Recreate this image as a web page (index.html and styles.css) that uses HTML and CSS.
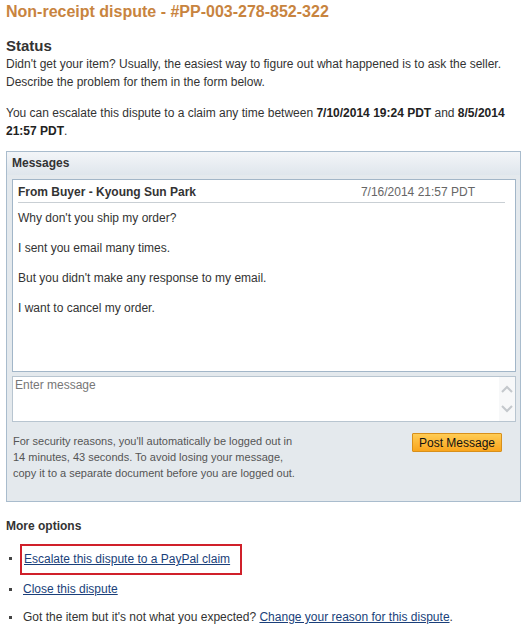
FILE: index.html
```html
<!DOCTYPE html>
<html>
<head>
<meta charset="utf-8">
<link rel="stylesheet" href="styles.css">
</head>
<body>
<div class="page">
  <h1 class="title">Non-receipt dispute - #PP-003-278-852-322</h1>
  <h2 class="status">Status</h2>
  <p class="text">Didn't get your item? Usually, the easiest way to figure out what happened is to ask the seller. Describe the problem for them in the form below.</p>
  <p class="text escalate">You can escalate this dispute to a claim any time between <b>7/10/2014 19:24 PDT</b> and <b>8/5/2014 21:57 PDT</b>.</p>

  <div class="panel">
    <div class="panel-head">Messages</div>
    <div class="panel-body">
      <div class="thread">
        <div class="msg-head">
          <span class="from">From Buyer - Kyoung Sun Park</span>
          <span class="date">7/16/2014 21:57 PDT</span>
        </div>
        <p class="msg-line">Why don't you ship my order?</p>
        <p class="msg-line">I sent you email many times.</p>
        <p class="msg-line">But you didn't make any response to my email.</p>
        <p class="msg-line">I want to cancel my order.</p>
      </div>
      <div class="compose">
        <span class="placeholder">Enter message</span>
        <div class="scroll">
          <svg width="14" height="10" viewBox="0 0 14 10"><path d="M2 8 L7 3 L12 8" fill="none" stroke="#c4c8cc" stroke-width="2"/></svg>
          <svg width="14" height="10" viewBox="0 0 14 10"><path d="M2 2 L7 7 L12 2" fill="none" stroke="#c4c8cc" stroke-width="2"/></svg>
        </div>
      </div>
      <div class="footer-row">
        <p class="security">For security reasons, you'll automatically be logged out in 14 minutes, 43 seconds. To avoid losing your message, copy it to a separate document before you are logged out.</p>
        <button class="post">Post Message</button>
      </div>
    </div>
  </div>

  <h3 class="more">More options</h3>
  <ul class="options">
    <li><span class="highlight"><a href="#">Escalate this dispute to a PayPal claim</a></span></li>
    <li><a href="#">Close this dispute</a></li>
    <li>Got the item but it's not what you expected? <a href="#">Change your reason for this dispute</a>.</li>
  </ul>
</div>
</body>
</html>
```
FILE: styles.css
```css
html, body {
  margin: 0;
  padding: 0;
  background: #fff;
}
body {
  font-family: "Liberation Sans", Arial, sans-serif;
  font-size: 12px;
  color: #333;
}
.page {
  padding: 0 8px 0 6px;
}
.title {
  margin: 0;
  padding-top: 1px;
  font-size: 16px;
  line-height: 21px;
  font-weight: bold;
  color: #c8843f;
}
.status {
  margin: 15px 0 0;
  font-size: 15px;
  line-height: 18px;
  font-weight: bold;
  color: #333;
}
.text {
  margin: 0;
  line-height: 18px;
  color: #333;
}
.text b { color: #222; }
.escalate {
  margin-top: 13px;
}
.panel {
  margin-top: 11px;
  border: 1px solid #a9bccd;
  background: #e4e9ed;
}
.panel-head {
  height: 23px;
  line-height: 22px;
  padding-left: 5px;
  font-weight: bold;
  color: #333;
  background: linear-gradient(#f3f5f8, #dfe6ec);
}
.panel-body {
  padding: 4px 4px 0 5px;
}
.thread {
  height: 191px;
  background: #fff;
  border: 1px solid #a2b6c8;
  padding: 0 10px 0 5px;
}
.msg-head {
  display: flex;
  justify-content: space-between;
  border-bottom: 1px solid #c9cfd4;
  height: 22px;
  line-height: 25px;
  margin-bottom: 6px;
}
.from {
  font-weight: bold;
  color: #333;
}
.date {
  color: #666;
  padding-right: 30px;
}
.msg-line {
  margin: 0 0 12px;
  line-height: 18px;
  color: #333;
}
.compose {
  margin-top: 4px;
  height: 44px;
  background: #fff;
  border: 1px solid #b8c5d0;
  display: flex;
  justify-content: space-between;
  padding-left: 2px;
}
.placeholder {
  color: #777;
  line-height: 17px;
}
.scroll {
  width: 16px;
  background: #f7f8f9;
  display: flex;
  flex-direction: column;
  align-items: center;
  justify-content: space-around;
  padding: 2px 0;
}
.footer-row {
  display: flex;
  justify-content: space-between;
  align-items: flex-start;
  padding: 11px 14px 0 1px;
  height: 68px;
}
.security {
  margin: 0;
  width: 282px;
  font-size: 11px;
  line-height: 16px;
  color: #555;
}
.post {
  margin-top: 0;
  font-family: "Liberation Sans", Arial, sans-serif;
  font-size: 12px;
  color: #111;
  height: 19px;
  padding: 0 6px;
  border: 1px solid #d8901b;
  border-radius: 1px;
  background: linear-gradient(#ffcc55, #f9a51d);
  line-height: 16px;
}
.more {
  margin: 15px 0 0;
  font-size: 12px;
  line-height: 18px;
  font-weight: bold;
  color: #333;
}
.options {
  list-style: none;
  margin: 14px 0 0;
  padding: 0;
}
.options li {
  position: relative;
  padding-left: 17px;
  line-height: 18px;
  margin-bottom: 10px;
  color: #333;
}
.options li::before {
  content: "";
  position: absolute;
  left: 3px;
  top: 8px;
  width: 3px;
  height: 3px;
  background: #444;
}
.options a {
  color: #1a3f7a;
  text-decoration: underline;
}
.highlight {
  display: inline-block;
  margin-left: -3px;
  margin-top: -5px;
  margin-bottom: -5px;
  padding: 4px 10px 5px 2px;
  border: 2px solid #d0202a;
}
```
